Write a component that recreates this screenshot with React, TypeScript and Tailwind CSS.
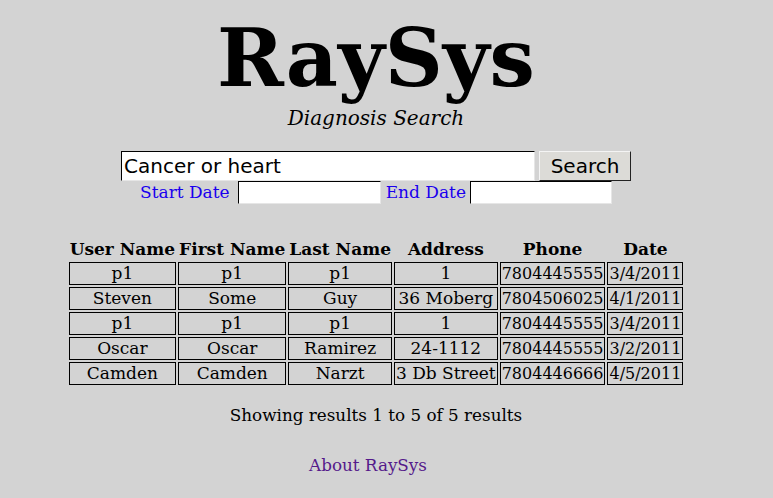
import React from "react";

const rows = [
  ["p1", "p1", "p1", "1", "7804445555", "3/4/2011"],
  ["Steven", "Some", "Guy", "36 Moberg", "7804506025", "4/1/2011"],
  ["p1", "p1", "p1", "1", "7804445555", "3/4/2011"],
  ["Oscar", "Oscar", "Ramirez", "24-1112", "7804445555", "3/2/2011"],
  ["Camden", "Camden", "Narzt", "3 Db Street", "7804446666", "4/5/2011"],
];

const headers = ["User Name", "First Name", "Last Name", "Address", "Phone", "Date"];

export default function App() {
  return (
    <div className="min-h-screen bg-[#d3d3d3] font-['DejaVu_Serif',serif] text-black leading-[normal]">
      <div className="w-[752px] flex flex-col items-center">
        <h1 className="mt-[18px] text-[80.5px] leading-[80px] font-bold">RaySys</h1>
        <p className="mt-[8px] italic text-[20px] leading-[24px]">Diagnosis Search</p>

        <div className="mt-[21px] flex items-center gap-[4px]">
          <input
            type="text"
            defaultValue="Cancer or heart"
            className="w-[414px] h-[30px] bg-white px-[2px] font-['DejaVu_Sans',sans-serif] text-[20px] text-black border border-t-black border-l-black border-r-[#e6e6e6] border-b-[#e6e6e6] outline-none"
          />
          <button className="w-[92px] h-[30px] bg-[#dcdbd7] font-['DejaVu_Sans',sans-serif] text-[20px] leading-[normal] text-black border border-t-[#f4f4f4] border-l-[#f4f4f4] border-r-[#222] border-b-[#222]">
            Search
          </button>
        </div>

        <div className="flex items-center text-[17px] leading-[19px] text-[#1a00ee]">
          <span>Start Date</span>
          <input
            type="text"
            className="ml-[8px] w-[143px] h-[23px] bg-white border border-t-black border-l-black border-r-[#e6e6e6] border-b-[#e6e6e6] outline-none"
          />
          <span className="ml-[5px]">End Date</span>
          <input
            type="text"
            className="ml-[4px] w-[142px] h-[23px] bg-white border border-t-black border-l-black border-r-[#e6e6e6] border-b-[#e6e6e6] outline-none"
          />
        </div>

        <table className="mt-[33px] border-separate border-spacing-[2px] text-[17px] leading-[19px]">
          <thead>
            <tr>
              {headers.map((h) => (
                <th key={h} className="p-[1px] font-bold text-center whitespace-nowrap">
                  {h}
                </th>
              ))}
            </tr>
          </thead>
          <tbody>
            {rows.map((r, i) => (
              <tr key={i}>
                {r.map((c, j) => (
                  <td
                    key={j}
                    className={
                      j >= 4
                        ? "p-[1px] border border-black text-center whitespace-nowrap text-[16px]"
                        : "p-[1px] border border-black text-center whitespace-nowrap"
                    }
                  >
                    {c}
                  </td>
                ))}
              </tr>
            ))}
          </tbody>
        </table>

        <p className="mt-[19px] text-[16.8px] leading-[19px]">Showing results 1 to 5 of 5 results</p>

        <a href="#" className="mt-[31px] mr-[16px] text-[16.8px] leading-[19px] text-[#551a8b]">
          About RaySys
        </a>
      </div>
    </div>
  );
}
